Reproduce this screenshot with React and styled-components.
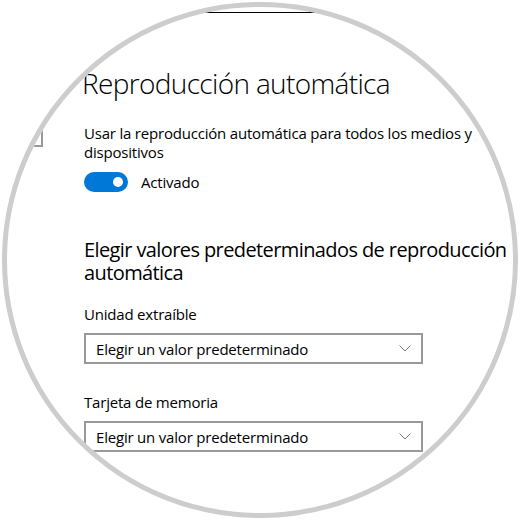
import React from "react";
import styled, { createGlobalStyle } from "styled-components";

const Global = createGlobalStyle`
  html, body { margin: 0; padding: 0; background: #ffffff; }
  body { font-family: "Open Sans", "Noto Sans", sans-serif; color: #000; }
`;

const Stage = styled.div`
  width: 520px;
  height: 520px;
  padding: 2px;
  box-sizing: border-box;
  background: #ffffff;
`;

const Lens = styled.div`
  width: 516px;
  height: 516px;
  box-sizing: border-box;
  border-radius: 50%;
  border: 5px solid #cdcdcd;
  overflow: hidden;
  background: #ffffff;
  display: flex;
  flex-direction: column;
`;

const TopEdge = styled.div`
  height: 5px;
  flex: none;
  border-bottom: 1px solid #000;
`;

const Body = styled.div`
  display: flex;
  flex: 1;
`;

const Sidebar = styled.div`
  width: 36px;
  flex: none;
  padding-top: 102px;
`;

const SearchBox = styled.div`
  height: 32px;
  border: 2px solid #999;
  border-left: none;
  box-sizing: border-box;
`;

const Main = styled.main`
  flex: 1;
  padding-left: 41px;
  padding-top: 52px;
  display: flex;
  flex-direction: column;
  align-items: flex-start;
`;

const Title = styled.h1`
  margin: 0 0 0 -2px;
  font-weight: 300;
  font-size: 28px;
  line-height: 36px;
  letter-spacing: -0.65px;
`;

const Text = styled.p`
  margin: 23px 0 0 0;
  font-size: 15px;
  line-height: 19px;
  letter-spacing: -0.2px;
  width: 400px;
`;

const ToggleRow = styled.div`
  display: flex;
  align-items: center;
  gap: 13px;
  margin-top: 10px;
  font-size: 15px;
  line-height: 20px;
  letter-spacing: -0.2px;
`;

const Toggle = styled.div`
  width: 44px;
  height: 20px;
  border-radius: 10px;
  background: #0078d7;
  display: flex;
  align-items: center;
  justify-content: flex-end;
  padding-right: 5px;
  box-sizing: border-box;
`;

const Knob = styled.div`
  width: 10px;
  height: 10px;
  border-radius: 50%;
  background: #fff;
`;

const Subtitle = styled.h2`
  margin: 46px 0 0 0;
  font-weight: 400;
  font-size: 20px;
  line-height: 23px;
  letter-spacing: -0.6px;
  width: 445px;
`;

const Label = styled.div`
  margin-top: ${(p) => p.$top}px;
  font-size: 15px;
  line-height: 19px;
  letter-spacing: -0.2px;
`;

const Select = styled.div`
  margin-top: 9px;
  width: 339px;
  height: 31px;
  box-sizing: border-box;
  border: 2px solid #999;
  display: flex;
  align-items: center;
  justify-content: space-between;
  padding: 0 10px 0 10px;
  font-size: 15px;
  letter-spacing: -0.2px;
`;

const Chevron = () => (
  <svg width="12" height="7" viewBox="0 0 12 7" fill="none">
    <path d="M0.5 0.5 L6 6 L11.5 0.5" stroke="#777" strokeWidth="1" />
  </svg>
);

export default function App() {
  return (
    <>
      <Global />
      <Stage>
        <Lens>
          <TopEdge />
          <Body>
            <Sidebar>
              <SearchBox />
            </Sidebar>
            <Main>
              <Title>Reproducción automática</Title>
              <Text>Usar la reproducción automática para todos los medios y dispositivos</Text>
              <ToggleRow>
                <Toggle>
                  <Knob />
                </Toggle>
                <span>Activado</span>
              </ToggleRow>
              <Subtitle>Elegir valores predeterminados de reproducción automática</Subtitle>
              <Label $top={21}>Unidad extraíble</Label>
              <Select>
                <span>Elegir un valor predeterminado</span>
                <Chevron />
              </Select>
              <Label $top={29}>Tarjeta de memoria</Label>
              <Select>
                <span>Elegir un valor predeterminado</span>
                <Chevron />
              </Select>
            </Main>
          </Body>
        </Lens>
      </Stage>
    </>
  );
}
